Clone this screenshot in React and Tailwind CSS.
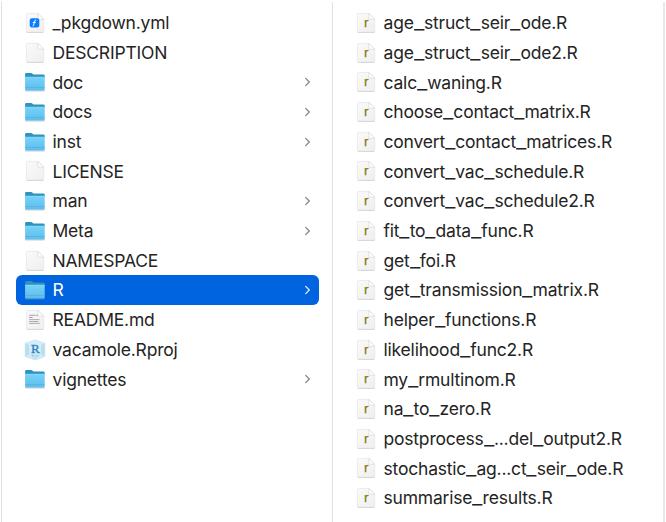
import React from "react";

const entries = [
  { name: "_pkgdown.yml", kind: "yml" },
  { name: "DESCRIPTION", kind: "blank" },
  { name: "doc", kind: "folder" },
  { name: "docs", kind: "folder" },
  { name: "inst", kind: "folder" },
  { name: "LICENSE", kind: "blank" },
  { name: "man", kind: "folder" },
  { name: "Meta", kind: "folder" },
  { name: "NAMESPACE", kind: "blank" },
  { name: "R", kind: "folder", selected: true },
  { name: "README.md", kind: "md" },
  { name: "vacamole.Rproj", kind: "rproj" },
  { name: "vignettes", kind: "folder" },
];

const scripts = [
  "age_struct_seir_ode.R",
  "age_struct_seir_ode2.R",
  "calc_waning.R",
  "choose_contact_matrix.R",
  "convert_contact_matrices.R",
  "convert_vac_schedule.R",
  "convert_vac_schedule2.R",
  "fit_to_data_func.R",
  "get_foi.R",
  "get_transmission_matrix.R",
  "helper_functions.R",
  "likelihood_func2.R",
  "my_rmultinom.R",
  "na_to_zero.R",
  "postprocess_...del_output2.R",
  "stochastic_ag...ct_seir_ode.R",
  "summarise_results.R",
];

function Gradients() {
  return (
    <svg className="absolute size-0" aria-hidden="true">
      <defs>
        <linearGradient id="paper" x1="0" y1="0" x2="1" y2="1">
          <stop offset="0" stopColor="#fafafa" />
          <stop offset="1" stopColor="#efefef" />
        </linearGradient>
        <linearGradient id="folder" x1="0" y1="0" x2="0" y2="1">
          <stop offset="0" stopColor="#79d2f8" />
          <stop offset="1" stopColor="#5bbdec" />
        </linearGradient>
      </defs>
    </svg>
  );
}

function Folder() {
  return (
    <svg className="size-[22px] shrink-0" viewBox="0 0 22 22">
      <path d="M1.2 19.9h19.4" stroke="#8b9aa3" strokeOpacity=".6" strokeWidth="1" />
      <path d="M1.1 3q0-1.1 1.1-1.1h5.1q.6 0 1 .5l.8.9q.3.3.8.3h9.6q1.2 0 1.2 1.1V7H1.1z" fill="#2f93bf" />
      <path d="M1.1 6h19.6v12.6q0 .9-.9.9H2q-.9 0-.9-.9z" fill="url(#folder)" />
      <path d="M1.1 6.2h19.6" stroke="#8cdcfb" strokeWidth=".7" />
      <path d="M1.3 16.5h19.2" stroke="#52afdc" strokeWidth=".7" />
    </svg>
  );
}

function Paper({ kind }) {
  return (
    <svg className="size-[22px] shrink-0" viewBox="0 0 22 22">
      <path d="M2.4 2.4q0-1 1-1h10.5l5.8 5.8v12.2q0 1-1 1H3.4q-1 0-1-1z" fill="url(#paper)" stroke="#e4e4e4" strokeWidth=".7" />
      <path d="M2.8 20.4h16.5" stroke="#cbcbcb" strokeWidth=".7" />
      <path d="M13.9 1.4v4.8q0 1 1 1h4.8z" fill="#fff" stroke="#d2d2d2" strokeWidth=".6" />
      {kind === "r" && (
        <text x="8.9" y="14.6" fontSize="13.5" fill="#857b18" stroke="#857b18" strokeWidth=".25" className="font-['Liberation_Sans',sans-serif]">r</text>
      )}
      {kind === "yml" && (
        <>
          <rect x="5.7" y="6.2" width="9.6" height="9.3" rx="2.2" fill="#087cff" />
          <path d="M12.2 8.1q-1.3-.3-1.7 1.2l-.9 4.1q-.2.8-1 .7M8.8 10.4h3" fill="none" stroke="#fff" strokeWidth="1" />
        </>
      )}
      {kind === "md" && (
        <g fill="none" strokeWidth=".9">
          <path d="M5.1 6.3h6.5" stroke="#79a8ad" />
          <path d="M12 6.3h2" stroke="#9b9eac" />
          <path d="M5.1 8.5h3.5" stroke="#dd79af" />
          <path d="M5.1 10.6h10.5M5.1 12.5h9.3M5.1 14.4h10.7" stroke="#a6a2b3" />
        </g>
      )}
    </svg>
  );
}

function Project() {
  return (
    <svg className="size-[22px] shrink-0" viewBox="0 0 22 22">
      <path d="M11 .9l9.8 3.3v13.2L11 21.1l-9.8-3.7V4.2z" fill="#d5edf9" stroke="#b5d7e8" strokeWidth=".5" />
      <path d="M1.4 4.3L5 6v9.8l-3.6 1.5zM20.6 4.3L17 6v9.8l3.6 1.5z" fill="#b8def1" />
      <path d="M5 15.8l6 5 6-5z" fill="#c0e3f4" />
      <text x="11.2" y="13.8" textAnchor="middle" fontSize="13" fill="#3182bd" stroke="#3182bd" strokeWidth=".35" className="font-['Liberation_Serif',serif]">R</text>
      <path d="M8 16.5h1.8M12.2 16.8h1.5" stroke="#7eb9db" strokeWidth=".8" />
    </svg>
  );
}

function FileIcon({ kind }) {
  if (kind === "folder") return <Folder />;
  if (kind === "rproj") return <Project />;
  return <Paper kind={kind} />;
}

// Underscores between words are drawn wider than the font's own glyph.
function FileName({ name }) {
  return name.split(/(?<=.)(_)/).map((part, i) =>
    part === "_" ? (
      <span key={i} className="mr-[2.5px] inline-block origin-left scale-x-[1.3]">_</span>
    ) : (
      part
    )
  );
}

function Row({ name, kind, selected }) {
  return (
    <li className={`flex h-[29.7px] items-center rounded-[6px] pl-2 pr-[7px] ${selected ? "bg-[#0064e1] text-white" : ""}`}>
      <FileIcon kind={kind} />
      <span className="ml-[6.5px] flex-1 whitespace-nowrap"><FileName name={name} /></span>
      {kind === "folder" && (
        <svg className="size-[10px] shrink-0" viewBox="0 0 10 10" fill="none">
          <path d="M3.7 1.4L7.3 5 3.7 8.6" stroke={selected ? "#e4edfc" : "#858585"} strokeWidth="1.3" strokeLinecap="round" strokeLinejoin="round" />
        </svg>
      )}
    </li>
  );
}

export default function App() {
  return (
    <main className="flex h-[522px] w-[666px] overflow-hidden bg-white pt-[2px] font-['Inter',sans-serif] text-[17.5px] leading-none tracking-[-0.2px] text-[#242424]">
      <Gradients />
      <ul className="ml-px w-[332px] border-x border-[#e0e0e0] pl-[14px] pr-[13px] pt-[6.2px]">
        {entries.map((entry) => <Row key={entry.name} {...entry} />)}
      </ul>
      <ul className="w-[332px] border-r-2 border-[#e9e9e9] pl-[14px] pr-[13px] pt-[6.2px]">
        {scripts.map((name) => <Row key={name} name={name} kind="r" />)}
      </ul>
    </main>
  );
}
